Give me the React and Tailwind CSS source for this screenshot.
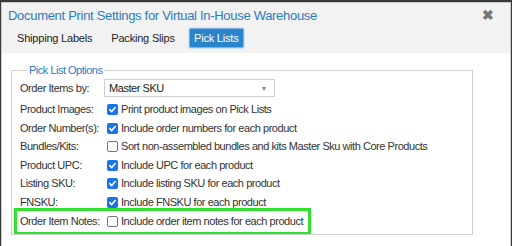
import React from "react";

const rows = [
  { label: "Product Images:", text: "Print product images on Pick Lists", checked: true },
  { label: "Order Number(s):", text: "Include order numbers for each product", checked: true },
  { label: "Bundles/Kits:", text: "Sort non-assembled bundles and kits Master Sku with Core Products", checked: false },
  { label: "Product UPC:", text: "Include UPC for each product", checked: true },
  { label: "Listing SKU:", text: "Include listing SKU for each product", checked: true },
  { label: "FNSKU:", text: "Include FNSKU for each product", checked: true },
];

function Box({ checked }) {
  if (checked) {
    return (
      <span className="w-[11px] h-[11px] rounded-[2px] bg-[#1a73e8] flex items-center justify-center shrink-0">
        <svg width="9" height="9" viewBox="0 0 10 10">
          <path d="M2 5.2 L4.1 7.3 L8 2.8" fill="none" stroke="white" strokeWidth="1.8" strokeLinecap="round" strokeLinejoin="round" />
        </svg>
      </span>
    );
  }
  return <span className="w-[11px] h-[11px] rounded-[2px] border border-[#777] bg-white shrink-0" />;
}

function Row({ label, text, checked }) {
  return (
    <div className="flex items-center h-[18.5px]">
      <div className="w-[87px] shrink-0 whitespace-nowrap">{label}</div>
      <Box checked={checked} />
      <div className="ml-[3px] whitespace-nowrap">{text}</div>
    </div>
  );
}

export default function App() {
  return (
    <div
      className="w-[512px] h-[246px] bg-[#3a3a3a] pt-[2px] pl-[1px] overflow-hidden"
      style={{ fontFamily: "Arial, 'Liberation Sans', Helvetica, sans-serif" }}
    >
      <div className="w-[510px] h-[260px] bg-white border border-[#c8c8c8]">
        <div className="bg-[#f2f2f2] h-[50px] relative">
          <div className="flex items-center justify-between pl-[6px] pr-[16px] pt-[3px] h-[21px]">
            <span className="text-[13px] tracking-[-0.3px] text-[#2a7cc0] leading-none">
              Document Print Settings for Virtual In-House Warehouse
            </span>
            <span className="text-[#777] text-[14px] font-bold leading-none">✖</span>
          </div>
          <div className="flex items-center pl-[15px] mt-[4px] text-[11px] tracking-[-0.2px] text-[#222]">
            <span>Shipping Labels</span>
            <span className="ml-[19px]">Packing Slips</span>
            <span className="ml-[14px] bg-[#2a84cc] text-white w-[55px] justify-center h-[20px] flex items-center border border-[#7fb4e0] rounded-[2px] shadow-[0_0_0_1px_#cfe2f2]">
              Pick Lists
            </span>
          </div>
        </div>
        <div className="px-[9px] pt-[12px]">
          <fieldset className="border border-[#cfcfcf] w-[462px] min-w-0 h-[170px] pl-[8px] pt-[2px] overflow-hidden">
            <legend className="text-[11px] tracking-[-0.5px] text-[#2a7cc0] px-[2px] ml-[7px] leading-none">Pick List Options</legend>
            <div className="text-[11px] tracking-[-0.45px] text-[#333] leading-none">
              <div className="flex items-center h-[20px]">
                <div className="w-[84px] shrink-0">Order Items by:</div>
                <div className="w-[171px] h-[18px] border border-[#cfcfcf] flex items-center justify-between pl-[4px] pr-[7px] text-[#222]">
                  <span>Master SKU</span>
                  <span className="text-[#888] text-[7px]">▼</span>
                </div>
              </div>
              <div className="h-[2.5px]" />
              {rows.map((r) => (
                <Row key={r.label} {...r} />
              ))}
              <div className="relative -ml-[6px] mt-[-4px] w-[297px] h-[27px] border-[3px] border-[#2fe02f] bg-white flex items-center pl-[3px]">
                <div className="w-[87px] shrink-0 whitespace-nowrap">Order Item Notes:</div>
                <Box checked={false} />
                <div className="ml-[3px] whitespace-nowrap">Include order item notes for each product</div>
              </div>
            </div>
          </fieldset>
        </div>
      </div>
    </div>
  );
}
